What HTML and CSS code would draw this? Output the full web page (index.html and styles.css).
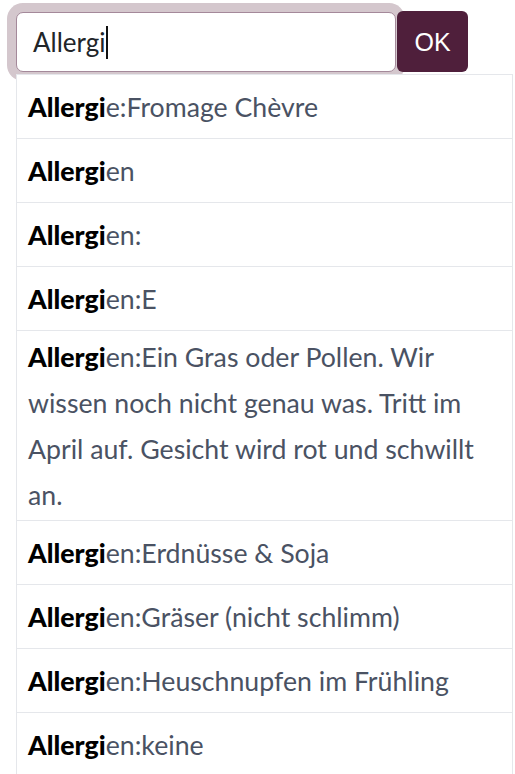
FILE: index.html
```html
<!DOCTYPE html>
<html lang="de">
<head>
<meta charset="utf-8">
<title>Suche</title>
<link rel="stylesheet" href="styles.css">
</head>
<body>
<div class="search">
  <div class="search-bar">
    <div class="field"><span class="field-text">Allergi</span><span class="caret"></span></div>
    <button class="ok-btn" type="button">OK</button>
  </div>
  <ul class="suggestions">
    <li class="item"><span class="text"><b class="hit">Allergi</b>e:Fromage Chèvre</span></li>
    <li class="item"><span class="text"><b class="hit">Allergi</b>en</span></li>
    <li class="item"><span class="text"><b class="hit">Allergi</b>en:</span></li>
    <li class="item"><span class="text"><b class="hit">Allergi</b>en:E</span></li>
    <li class="item"><span class="text"><b class="hit">Allergi</b>en:Ein Gras oder Pollen. Wir wissen noch nicht genau was. Tritt im April auf. Gesicht wird rot und schwillt an.</span></li>
    <li class="item"><span class="text"><b class="hit">Allergi</b>en:Erdnüsse &amp; Soja</span></li>
    <li class="item"><span class="text"><b class="hit">Allergi</b>en:Gräser (nicht schlimm)</span></li>
    <li class="item"><span class="text"><b class="hit">Allergi</b>en:Heuschnupfen im Frühling</span></li>
    <li class="item"><span class="text"><b class="hit">Allergi</b>en:keine</span></li>
  </ul>
</div>
</body>
</html>
```
FILE: styles.css
```css
html, body {
  margin: 0;
  padding: 0;
  background: #ffffff;
}

body {
  font-family: Lato, "Open Sans", sans-serif;
  color: #4a5263;
}

.search {
  padding: 11px 2px 0 16px;
}

.search-bar {
  display: flex;
  align-items: flex-start;
}

.field {
  box-sizing: border-box;
  width: 380px;
  height: 60px;
  margin-top: 1px;
  padding-left: 16px;
  display: flex;
  align-items: center;
  border: 1px solid #a4899a;
  border-radius: 7px;
  box-shadow: 0 0 0 9px #d4c7cd;
  background: #ffffff;
  font-size: 26px;
  color: #212529;
}

.caret {
  display: inline-block;
  width: 2px;
  height: 33px;
  margin-left: 1px;
  background: #111111;
}

.ok-btn {
  box-sizing: border-box;
  position: relative;
  width: 71px;
  height: 61px;
  margin-left: 1px;
  padding: 2px 0 0;
  border: 0;
  border-radius: 6px;
  background: #4f1f3b;
  color: #ffffff;
  font-family: "Liberation Sans", Arial, sans-serif;
  font-size: 25px;
}

.suggestions {
  position: relative;
  z-index: 2;
  margin: 2px 0 0 0;
  padding: 0;
  list-style: none;
  background: #ffffff;
  border: 1px solid #e5e7eb;
  border-bottom: 0;
}

.item {
  box-sizing: border-box;
  min-height: 64px;
  display: flex;
  align-items: center;
  padding: 3px 20px 2px 11px;
  border-bottom: 1px solid #e5e7eb;
  font-size: 26.7px;
  line-height: 46px;
}

.hit {
  font-weight: 900;
  color: #000000;
}
```
